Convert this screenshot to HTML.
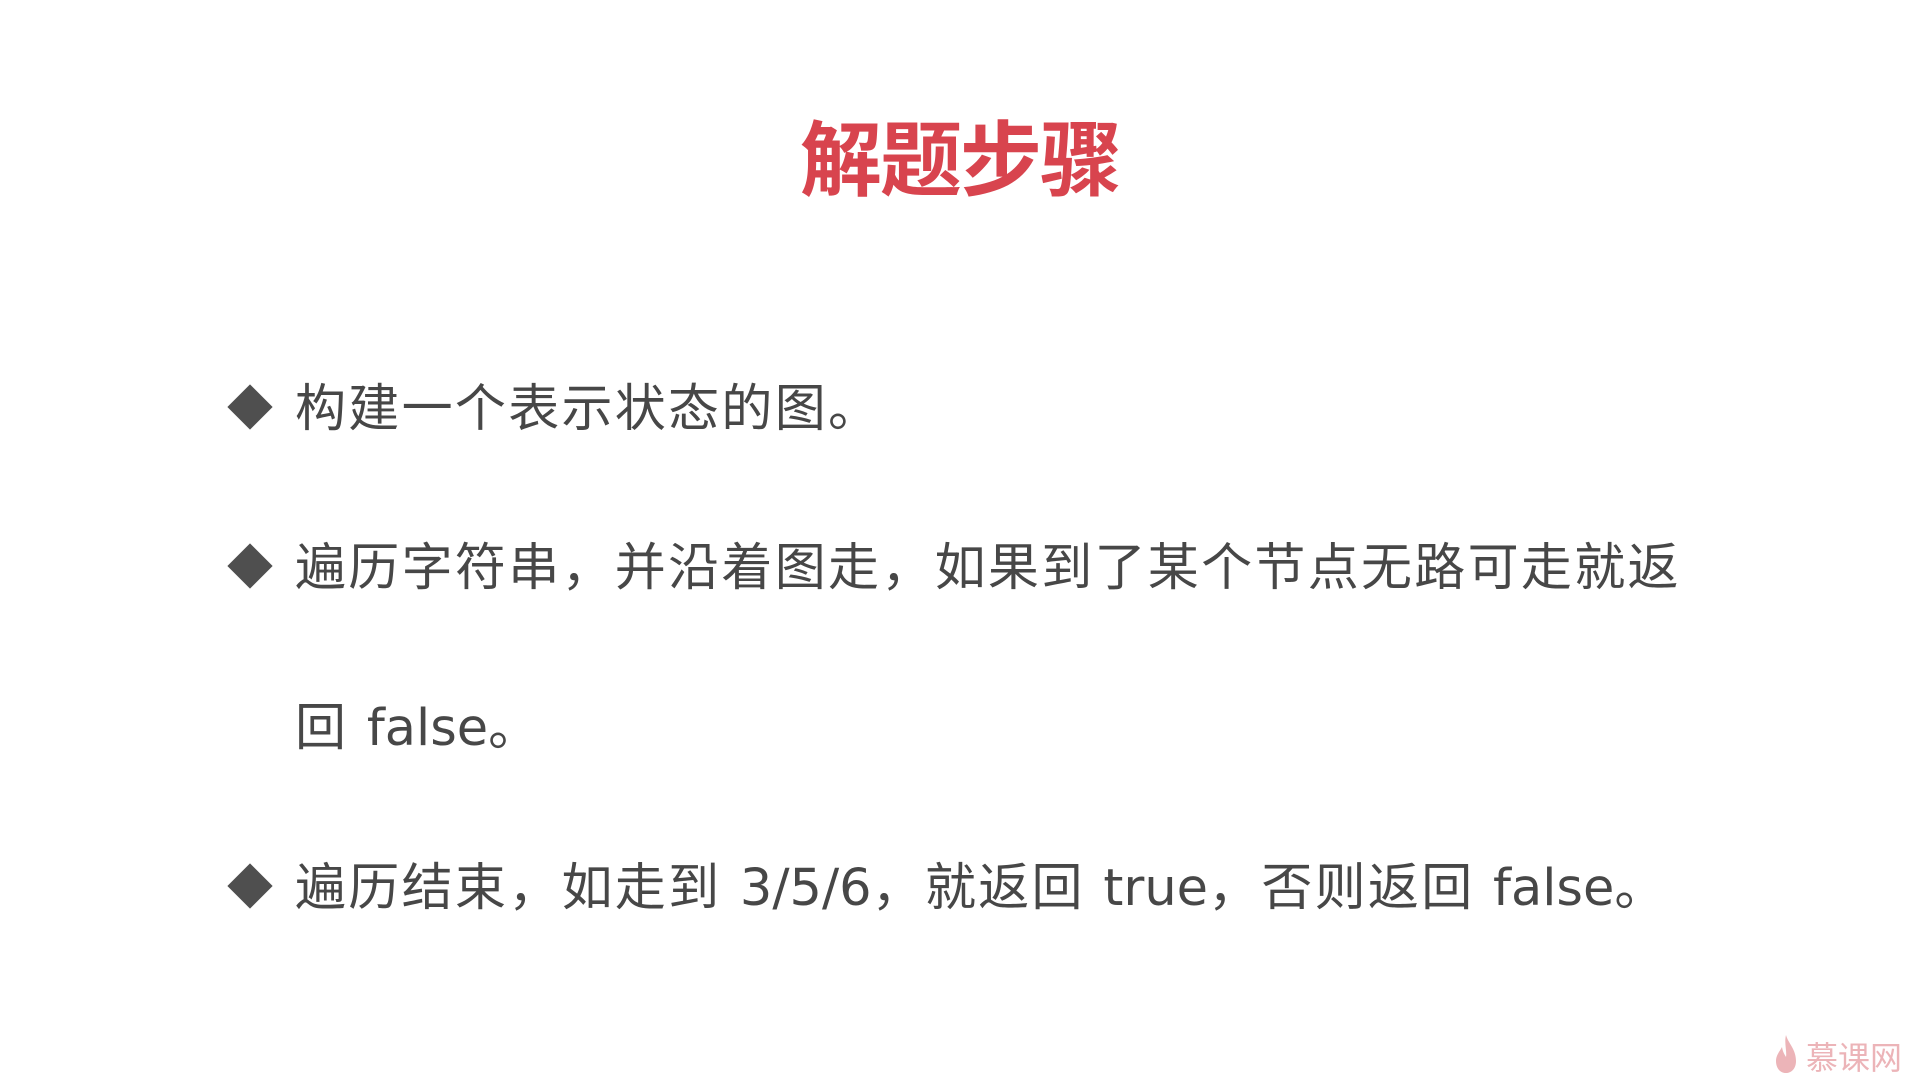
<!DOCTYPE html>
<html><head><meta charset="utf-8"><style>
body{margin:0;width:1920px;height:1080px;background:#fff;position:relative;overflow:hidden;font-family:"Liberation Sans","Noto Sans CJK SC",sans-serif}
.t{position:absolute;left:0;width:1920px;top:112px;text-align:center;font-size:82px;font-weight:bold;color:#d8444e;line-height:100px;letter-spacing:-2px}
.l{position:absolute;left:295px;font-size:51px;color:#474747;line-height:60px;white-space:nowrap;letter-spacing:2.3px;font-family:"DejaVu Sans","Noto Sans CJK SC",sans-serif}
.l span{letter-spacing:0}
.d{position:absolute;left:234px;width:32px;height:32px;background:#4f4f4f;transform:rotate(45deg)}
.w{position:absolute;left:1806px;top:1036px;font-size:32px;color:#ecb4b8;line-height:44px}
</style></head><body>
<div class="t">解题步骤</div>
<div class="d" style="top:391px"></div><div class="l" style="top:380px">构建一个表示状态的图。</div>
<div class="d" style="top:550px"></div><div class="l" style="top:539px">遍历字符串，并沿着图走，如果到了某个节点无路可走就返</div>
<div class="l" style="top:699px">回 <span>false</span>。</div>
<div class="d" style="top:870px"></div><div class="l" style="top:859px">遍历结束，如走到 <span>3/5/6</span>，就返回 <span>true</span>，否则返回 <span>false</span>。</div>
<svg style="position:absolute;left:1774px;top:1033px" width="24" height="42" viewBox="0 0 24 42"><path d="M12 2 C14 10 22 16 22 28 C22 36 17 40 12 40 C6 40 2 35 2 28 C2 22 6 18 8 14 C9 20 11 22 12 24 C13 18 10 10 12 2Z" fill="#ecb4b8"/></svg>
<div class="w">慕课网</div>
</body></html>
